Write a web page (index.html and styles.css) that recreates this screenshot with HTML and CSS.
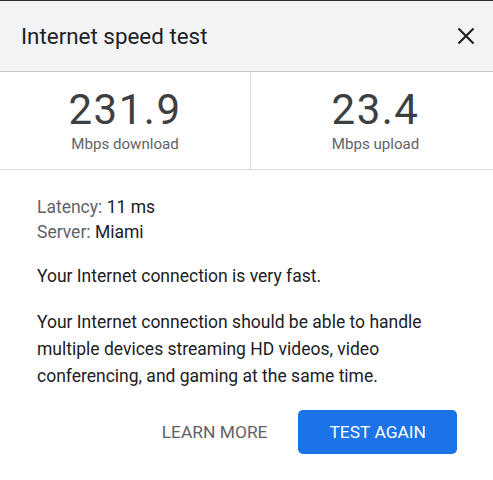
FILE: index.html
```html
<!DOCTYPE html>
<html lang="en">
<head>
<meta charset="utf-8">
<title>Internet speed test</title>
<link rel="stylesheet" href="styles.css">
</head>
<body>
<div class="dialog">
  <header class="head">
    <h1 class="title">Internet speed test</h1>
    <button class="close" aria-label="Close">
      <svg width="18" height="18" viewBox="0 0 18 18"><path d="M1.5 1.5L16.5 16.5M16.5 1.5L1.5 16.5" stroke="#202124" stroke-width="2.2" fill="none"/></svg>
    </button>
  </header>
  <section class="stats">
    <div class="stat">
      <div class="num">231.9</div>
      <div class="unit">Mbps download</div>
    </div>
    <div class="stat">
      <div class="num">23.4</div>
      <div class="unit">Mbps upload</div>
    </div>
  </section>
  <section class="body">
    <div class="meta">
      <div><span class="lbl">Latency:</span> 11 ms</div>
      <div><span class="lbl">Server:</span> Miami</div>
    </div>
    <p class="para">Your Internet connection is very fast.</p>
    <p class="para">Your Internet connection should be able to handle multiple devices streaming HD videos, video conferencing, and gaming at the same time.</p>
    <div class="actions">
      <button class="btn text">LEARN MORE</button>
      <button class="btn primary">TEST AGAIN</button>
    </div>
  </section>
</div>
</body>
</html>
```
FILE: styles.css
```css
html, body {
  margin: 0;
  padding: 0;
  background: #ffffff;
  overflow: hidden;
}
body {
  font-family: Roboto, "Liberation Sans", sans-serif;
  color: #202124;
}
.dialog {
  width: 500px;
  border-top: 1px solid #2e2e2e;
}
.head {
  height: 70px;
  background: #f1f3f4;
  border-bottom: 1px solid #c4c6c8;
  display: flex;
  align-items: center;
  justify-content: space-between;
  padding: 0 25px 0 21px;
}
.title {
  margin: 0;
  font-size: 22.4px;
  font-weight: 400;
  color: #202124;
}
.close {
  border: 0;
  background: none;
  padding: 0;
  width: 18px;
  height: 18px;
  display: flex;
}
.stats {
  display: grid;
  grid-template-columns: 250px 250px;
  border-bottom: 1px solid #dadce0;
}
.stat {
  text-align: center;
  padding: 18px 0 15px;
}
.stat + .stat {
  border-left: 1px solid #d6d8da;
}
.num {
  font-size: 42px;
  line-height: 40px;
  letter-spacing: 1.5px;
  color: #3c4043;
}
.unit {
  margin-top: 4px;
  font-size: 15.1px;
  line-height: 20px;
  color: #5f6368;
}
.body {
  padding: 25px 43px 26px 37px;
  font-size: 17.5px;
}
.meta {
  line-height: 24.75px;
}
.lbl {
  color: #5f6368;
}
.para {
  margin: 18.5px 0 0;
  line-height: 27px;
}
.actions {
  display: flex;
  justify-content: flex-end;
  margin-top: 20px;
}
.btn {
  font-family: Roboto, "Liberation Sans", sans-serif;
  font-size: 17.4px;
  height: 44px;
  border-radius: 5px;
  padding: 0 31px;
  border: 0;
  cursor: pointer;
}
.text {
  background: none;
  color: #5f6368;
}
.primary {
  background: #1a73e8;
  color: #ffffff;
}
```
